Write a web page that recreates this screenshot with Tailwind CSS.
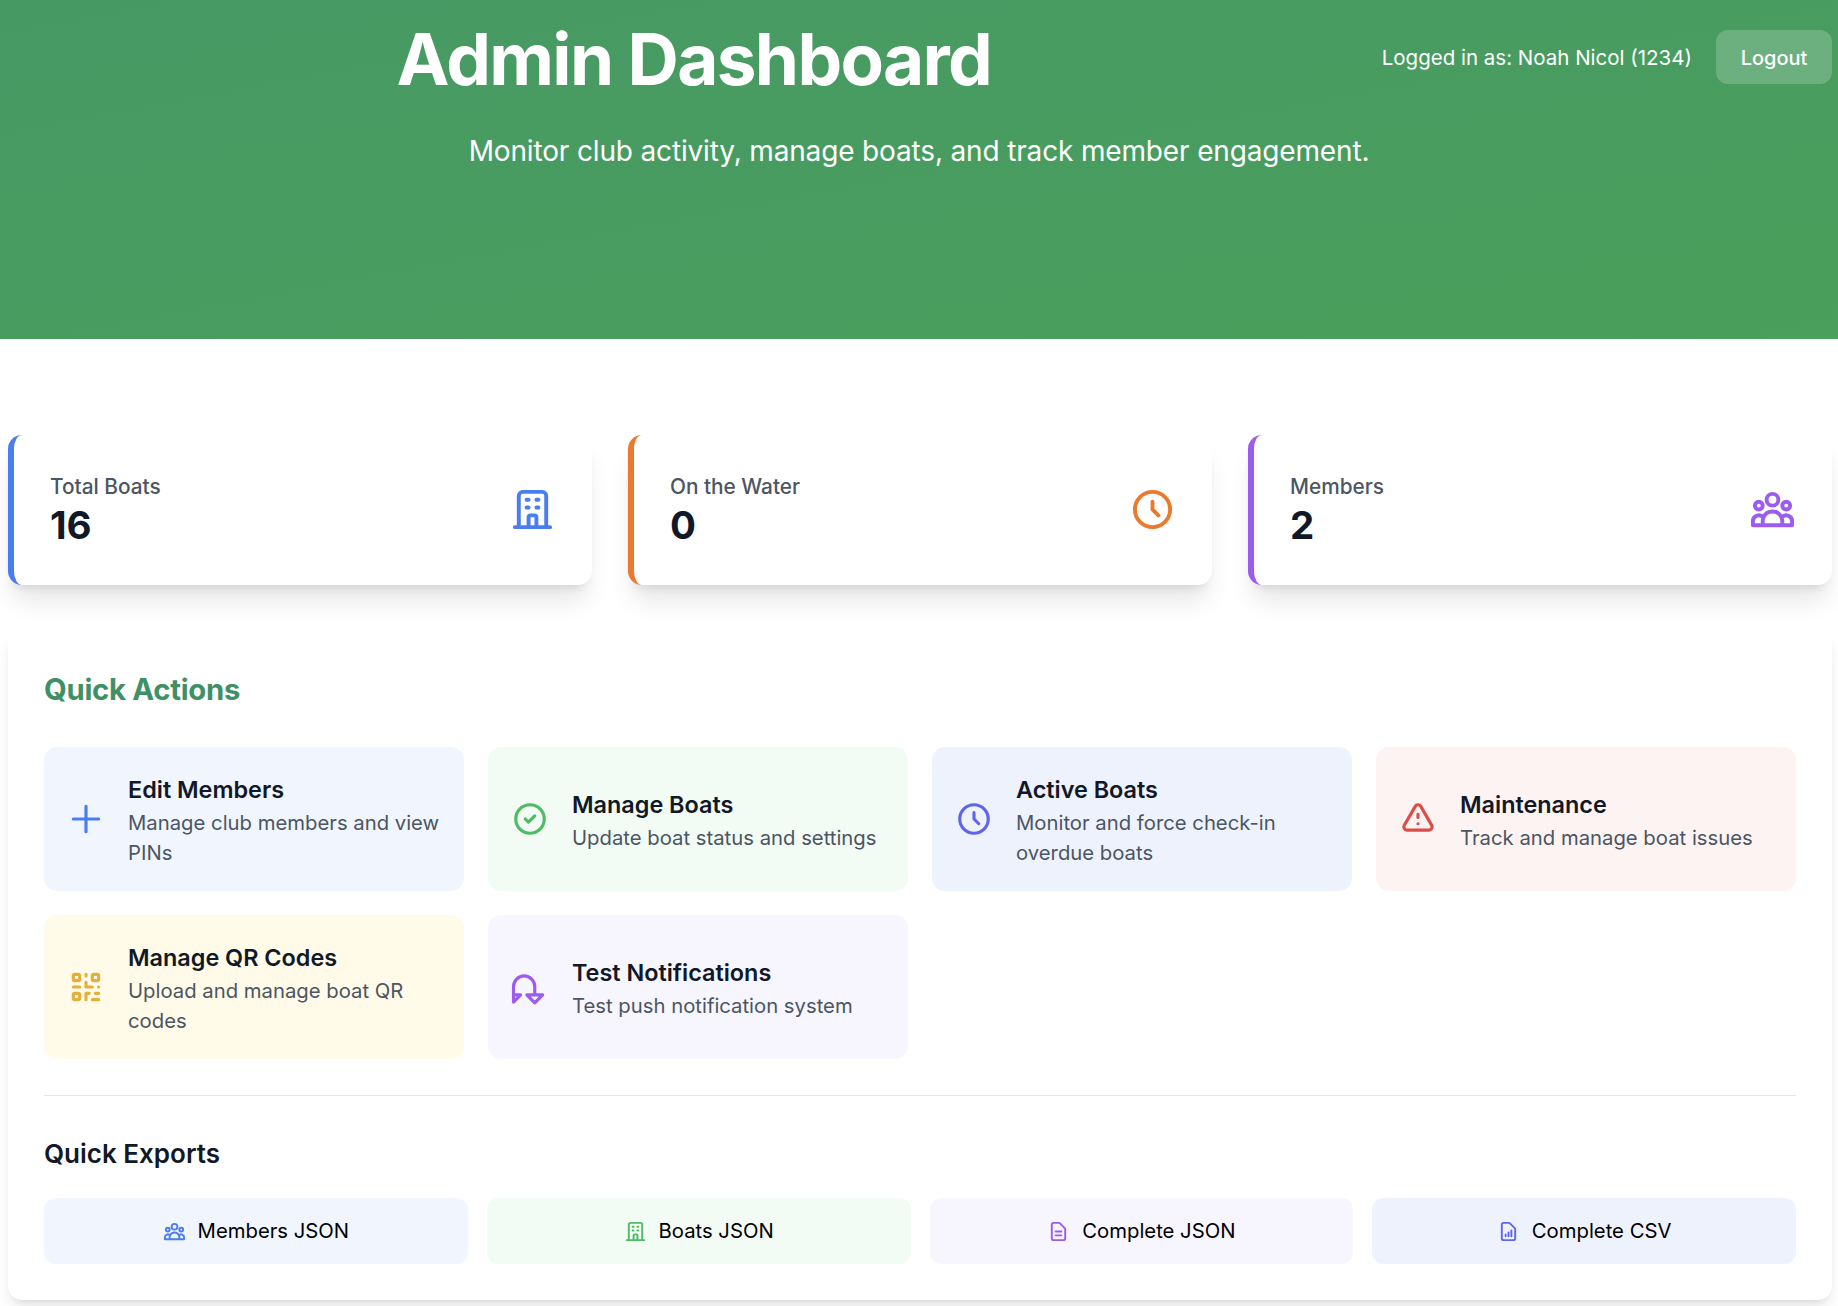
<!DOCTYPE html>
<html lang="en">

<head>
    <meta charset="UTF-8">
    <meta name="viewport" content="width=device-width, initial-scale=1.0">
    <title>Admin Dashboard</title>
    <script src="https://cdn.jsdelivr.net/npm/@tailwindcss/browser@4"></script>
</head>

<body class="h-[1306px] overflow-hidden bg-white font-[Inter,sans-serif] text-[#111827]">
    <header class="h-[339px] bg-linear-to-br from-[#479964] to-[#4a9f5b] pt-[30px] text-white">
        <div class="flex h-[54px] items-center px-[6px]">
            <h1 class="flex-1 pt-[4px] text-center text-[71px] font-bold leading-none tracking-[-0.0235em]">Admin Dashboard</h1>
            <span class="mr-[24px] pt-[2px] text-[20.5px]">Logged in as: Noah Nicol (1234)</span>
            <button class="h-[54px] w-[116px] rounded-[12px] bg-white/20 pt-[2px] text-[20px] font-medium">Logout</button>
        </div>
        <p class="mt-[50px] text-center text-[28px] leading-[34px] tracking-[-0.0055em]">Monitor club activity, manage boats, and track member engagement.</p>
    </header>

    <main class="pl-2 pr-[6px]">
        <!-- stats -->
        <section class="mt-[96px] grid grid-cols-3 gap-[36px]">
            <div class="flex h-[150px] items-center justify-between rounded-[14px] border-l-[6px] border-[#4a7eef] bg-white px-[36px] shadow-xl">
                <div>
                    <p class="text-[20.8px] font-medium leading-[28px] text-[#4b5563]">Total Boats</p>
                    <p class="mt-[2px] text-[38.5px] font-bold leading-[44px]">16</p>
                </div>
                <svg class="mb-[2px] h-[47px] w-[47px] text-[#4a7eef]" fill="none" viewBox="0 0 24 24" stroke="currentColor" stroke-width="2" stroke-linecap="round" stroke-linejoin="round">
                    <path d="M19 21V5a2 2 0 00-2-2H7a2 2 0 00-2 2v16m14 0h2m-2 0h-5m-9 0H3m2 0h5M9 7h1m-1 4h1m4-4h1m-1 4h1m-5 10v-5a1 1 0 011-1h2a1 1 0 011 1v5m-4 0h4" />
                </svg>
            </div>
            <div class="flex h-[150px] items-center justify-between rounded-[14px] border-l-[6px] border-[#ec7a2e] bg-white px-[36px] shadow-xl">
                <div>
                    <p class="text-[20.8px] font-medium leading-[28px] text-[#4b5563]">On the Water</p>
                    <p class="mt-[2px] text-[38.5px] font-bold leading-[44px]">0</p>
                </div>
                <svg class="mb-[2px] h-[47px] w-[47px] text-[#ec7a2e]" fill="none" viewBox="0 0 24 24" stroke="currentColor" stroke-width="2" stroke-linecap="round" stroke-linejoin="round">
                    <path d="M12 8v4l3 3m6-3a9 9 0 11-18 0 9 9 0 0118 0z" />
                </svg>
            </div>
            <div class="flex h-[150px] items-center justify-between rounded-[14px] border-l-[6px] border-[#9c5cf0] bg-white px-[36px] shadow-xl">
                <div>
                    <p class="text-[20.8px] font-medium leading-[28px] text-[#4b5563]">Members</p>
                    <p class="mt-[2px] text-[38.5px] font-bold leading-[44px]">2</p>
                </div>
                <svg class="mb-[2px] h-[47px] w-[47px] text-[#9c5cf0]" fill="none" viewBox="0 0 24 24" stroke="currentColor" stroke-width="2" stroke-linecap="round" stroke-linejoin="round">
                    <path d="M17 20h5v-2a3 3 0 00-5.356-1.857M17 20H7m10 0v-2c0-.656-.126-1.283-.356-1.857M7 20H2v-2a3 3 0 015.356-1.857M7 20v-2c0-.656.126-1.283.356-1.857m0 0a5.002 5.002 0 019.288 0M15 7a3 3 0 11-6 0 3 3 0 016 0zm6 3a2 2 0 11-4 0 2 2 0 014 0zM7 10a2 2 0 11-4 0 2 2 0 014 0z" />
                </svg>
            </div>
        </section>

        <section class="mt-[45px] rounded-[14px] bg-white px-[36px] pb-[36px] pt-[43px] shadow-lg">
            <h2 class="mb-[40px] text-[29.3px] font-bold leading-[34px] tracking-[-0.01em] text-[#3f8f67]">Quick Actions</h2>

            <!-- action cards -->
            <div class="grid grid-cols-4 gap-x-[24px] gap-y-[24px]">
                <a class="flex h-[144px] items-center gap-[23px] rounded-[13px] bg-[#f0f5fe] px-[23px]">
                    <svg class="h-[38px] w-[38px] shrink-0 text-[#4a7eef]" fill="none" viewBox="0 0 24 24" stroke="currentColor" stroke-width="2" stroke-linecap="round" stroke-linejoin="round">
                        <path d="M12 4v16m8-8H4" />
                    </svg>
                    <div class="pt-[5px]">
                        <h3 class="text-[23.4px] font-semibold leading-[30px]">Edit Members</h3>
                        <p class="mt-[3px] text-[20.3px] leading-[30px] text-[#4b5563]">Manage club members and view PINs</p>
                    </div>
                </a>
                <a class="flex h-[144px] items-center gap-[23px] rounded-[13px] bg-[#f2fcf5] px-[23px]">
                    <svg class="h-[38px] w-[38px] shrink-0 text-[#4fbb63]" fill="none" viewBox="0 0 24 24" stroke="currentColor" stroke-width="2" stroke-linecap="round" stroke-linejoin="round">
                        <path d="M9 12l2 2 4-4m6 2a9 9 0 11-18 0 9 9 0 0118 0z" />
                    </svg>
                    <div class="pt-[5px]">
                        <h3 class="text-[23.4px] font-semibold leading-[30px]">Manage Boats</h3>
                        <p class="mt-[3px] text-[20.3px] leading-[30px] text-[#4b5563]">Update boat status and settings</p>
                    </div>
                </a>
                <a class="flex h-[144px] items-center gap-[23px] rounded-[13px] bg-[#eef2fd] px-[23px]">
                    <svg class="h-[38px] w-[38px] shrink-0 text-[#5f66ec]" fill="none" viewBox="0 0 24 24" stroke="currentColor" stroke-width="2" stroke-linecap="round" stroke-linejoin="round">
                        <path d="M12 8v4l3 3m6-3a9 9 0 11-18 0 9 9 0 0118 0z" />
                    </svg>
                    <div class="pt-[5px]">
                        <h3 class="text-[23.4px] font-semibold leading-[30px]">Active Boats</h3>
                        <p class="mt-[3px] text-[20.3px] leading-[30px] text-[#4b5563]">Monitor and force check-in overdue boats</p>
                    </div>
                </a>
                <a class="flex h-[144px] items-center gap-[23px] rounded-[13px] bg-[#fdf3f2] px-[23px]">
                    <svg class="h-[38px] w-[38px] shrink-0 text-[#dd4c46]" fill="none" viewBox="0 0 24 24" stroke="currentColor" stroke-width="2" stroke-linecap="round" stroke-linejoin="round">
                        <path d="M12 9v2m0 4h.01m-6.938 4h13.856c1.54 0 2.502-1.667 1.732-3L13.732 4c-.77-1.333-2.694-1.333-3.464 0L3.34 16c-.77 1.333.192 3 1.732 3z" />
                    </svg>
                    <div class="pt-[5px]">
                        <h3 class="text-[23.4px] font-semibold leading-[30px]">Maintenance</h3>
                        <p class="mt-[3px] text-[20.3px] leading-[30px] text-[#4b5563]">Track and manage boat issues</p>
                    </div>
                </a>
                <a class="flex h-[144px] items-center gap-[23px] rounded-[13px] bg-[#fffbe8] px-[23px]">
                    <svg class="h-[38px] w-[38px] shrink-0 text-[#e4b03c]" fill="none" viewBox="0 0 24 24" stroke="currentColor" stroke-width="2" stroke-linecap="round" stroke-linejoin="round">
                        <path d="M12 4v1m6 11h2m-6 0h-2v4m0-11v3m0 0h.01M12 12h4.01M16 20h4M4 12h4m12 0h.01M5 8h2a1 1 0 001-1V5a1 1 0 00-1-1H5a1 1 0 00-1 1v2a1 1 0 001 1zm12 0h2a1 1 0 001-1V5a1 1 0 00-1-1h-2a1 1 0 00-1 1v2a1 1 0 001 1zM5 20h2a1 1 0 001-1v-2a1 1 0 00-1-1H5a1 1 0 00-1 1v2a1 1 0 001 1z" />
                    </svg>
                    <div class="pt-[5px]">
                        <h3 class="text-[23.4px] font-semibold leading-[30px]">Manage QR Codes</h3>
                        <p class="mt-[3px] text-[20.3px] leading-[30px] text-[#4b5563]">Upload and manage boat QR codes</p>
                    </div>
                </a>
                <a class="flex h-[144px] items-center gap-[23px] rounded-[13px] bg-[#f7f5fe] px-[23px]">
                    <svg class="h-[38px] w-[38px] shrink-0 text-[#9c5cf0]" fill="none" viewBox="0 0 24 24" stroke="currentColor" stroke-width="2" stroke-linecap="round" stroke-linejoin="round">
                        <path d="M15 17h5l-5 5-5-5h5zM15 17v-5.3a6.7 6.7 0 00-13.4 0V21.5l4.5-4.5H1.6" />
                    </svg>
                    <div class="pt-[5px]">
                        <h3 class="text-[23.4px] font-semibold leading-[30px]">Test Notifications</h3>
                        <p class="mt-[3px] text-[20.3px] leading-[30px] text-[#4b5563]">Test push notification system</p>
                    </div>
                </a>
            </div>

            <div class="mt-[36px] border-t border-[#e5e7eb] pt-[41px]">
                <h3 class="mb-[27px] text-[26px] font-semibold leading-[34px]">Quick Exports</h3>
                <div class="grid grid-cols-4 gap-[19px]">
                    <a class="flex h-[66px] items-center justify-center gap-[12px] rounded-[12px] bg-[#f0f5fe] text-[20.3px] text-black">
                        <svg class="h-[23px] w-[23px] text-[#4a7eef]" fill="none" viewBox="0 0 24 24" stroke="currentColor" stroke-width="2" stroke-linecap="round" stroke-linejoin="round">
                            <path d="M17 20h5v-2a3 3 0 00-5.356-1.857M17 20H7m10 0v-2c0-.656-.126-1.283-.356-1.857M7 20H2v-2a3 3 0 015.356-1.857M7 20v-2c0-.656.126-1.283.356-1.857m0 0a5.002 5.002 0 019.288 0M15 7a3 3 0 11-6 0 3 3 0 016 0zm6 3a2 2 0 11-4 0 2 2 0 014 0zM7 10a2 2 0 11-4 0 2 2 0 014 0z" />
                        </svg>
                        Members JSON
                    </a>
                    <a class="flex h-[66px] items-center justify-center gap-[12px] rounded-[12px] bg-[#f2fcf5] text-[20.3px] text-black">
                        <svg class="h-[23px] w-[23px] text-[#4fbb63]" fill="none" viewBox="0 0 24 24" stroke="currentColor" stroke-width="2" stroke-linecap="round" stroke-linejoin="round">
                            <path d="M19 21V5a2 2 0 00-2-2H7a2 2 0 00-2 2v16m14 0h2m-2 0h-5m-9 0H3m2 0h5M9 7h1m-1 4h1m4-4h1m-1 4h1m-5 10v-5a1 1 0 011-1h2a1 1 0 011 1v5m-4 0h4" />
                        </svg>
                        Boats JSON
                    </a>
                    <a class="flex h-[66px] items-center justify-center gap-[12px] rounded-[12px] bg-[#f7f5fe] text-[20.3px] text-black">
                        <svg class="h-[23px] w-[23px] text-[#9c5cf0]" fill="none" viewBox="0 0 24 24" stroke="currentColor" stroke-width="2" stroke-linecap="round" stroke-linejoin="round">
                            <path d="M9 12h6m-6 4h6m2 5H7a2 2 0 01-2-2V5a2 2 0 012-2h5.586a1 1 0 01.707.293l5.414 5.414a1 1 0 01.293.707V19a2 2 0 01-2 2z" />
                        </svg>
                        Complete JSON
                    </a>
                    <a class="flex h-[66px] items-center justify-center gap-[12px] rounded-[12px] bg-[#eef2fd] text-[20.3px] text-black">
                        <svg class="h-[23px] w-[23px] text-[#5f66ec]" fill="none" viewBox="0 0 24 24" stroke="currentColor" stroke-width="2" stroke-linecap="round" stroke-linejoin="round">
                            <path d="M9 17v-2m3 2v-4m3 4v-6m2 10H7a2 2 0 01-2-2V5a2 2 0 012-2h5.586a1 1 0 01.707.293l5.414 5.414a1 1 0 01.293.707V19a2 2 0 01-2 2z" />
                        </svg>
                        Complete CSV
                    </a>
                </div>
            </div>
        </section>
    </main>
</body>

</html>
